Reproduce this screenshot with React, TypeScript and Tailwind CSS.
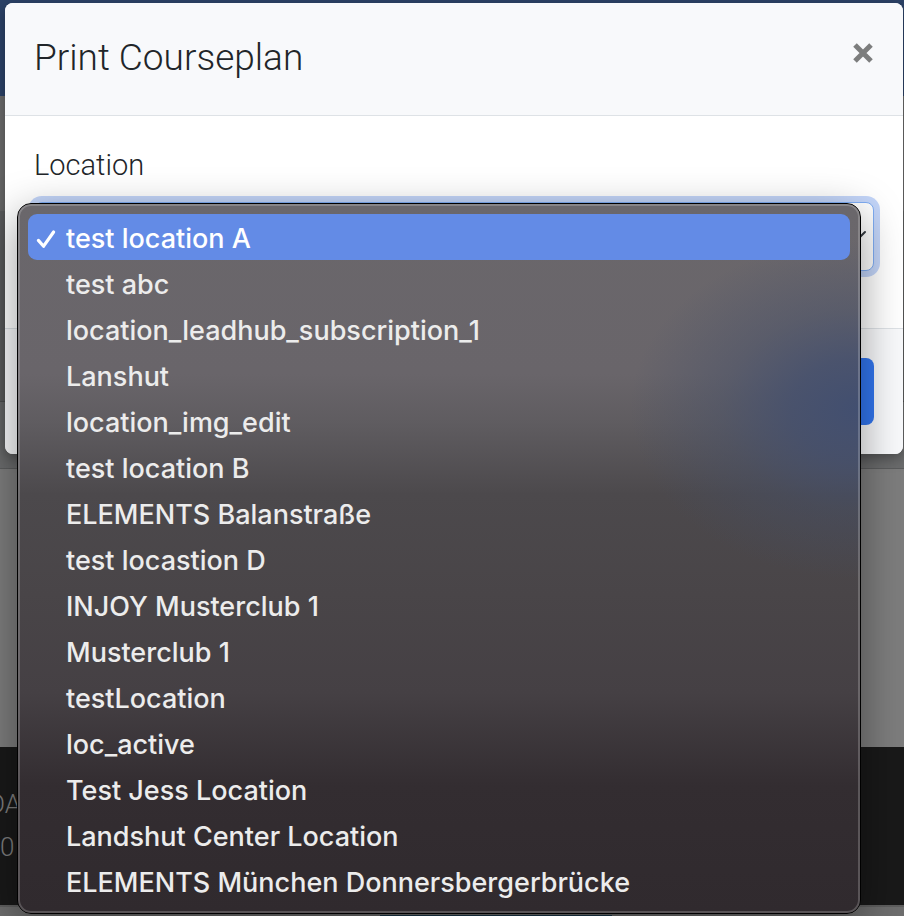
import { useState } from "react";
import clsx from "clsx";

const LOCATIONS = [
    "test location A",
    "test abc",
    "location_leadhub_subscription_1",
    "Lanshut",
    "location_img_edit",
    "test location B",
    "ELEMENTS Balanstraße",
    "test locastion D",
    "INJOY Musterclub 1",
    "Musterclub 1",
    "testLocation",
    "loc_active",
    "Test Jess Location",
    "Landshut Center Location",
    "ELEMENTS München Donnersbergerbrücke",
];

type MenuProps = {
    value: string;
    onChange: (value: string) => void;
};

function CheckIcon() {
    return (
        <svg viewBox="0 0 20 20" className="h-5 w-5" fill="none" aria-hidden="true">
            <path
                d="M2.4 11.4 L7.6 17.2 L17.6 3"
                stroke="currentColor"
                strokeWidth="3.2"
                strokeLinecap="round"
                strokeLinejoin="round"
            />
        </svg>
    );
}

function LocationMenu({ value, onChange }: MenuProps) {
    return (
        <div className="absolute top-px right-[13px] -left-[17px] z-10 rounded-[14px] border border-black bg-[radial-gradient(ellipse_230px_170px_at_100%_205px,#424f70_0%,#434f6ecc_30%,#444f6a66_60%,#454d6400_100%),linear-gradient(#6a676b_0%,#69656a_24%,#5f5c60_31%,#4c494c_41%,#494548_55%,#454044_69%,#332d31_82%,#302a2e_100%)] shadow-[0_12px_44px_rgba(0,0,0,0.4)]">
            <ul
                role="listbox"
                aria-label="Location"
                className="rounded-[13px] border-2 border-white/20 px-2 pt-2 pb-[7px] font-['Inter',sans-serif] text-[27px] leading-[42px] font-medium text-[#ececec]"
            >
                {LOCATIONS.map((location) => (
                    <li key={location} role="presentation">
                        <button
                            type="button"
                            role="option"
                            aria-selected={location === value}
                            onClick={() => onChange(location)}
                            className={clsx(
                                "flex h-[46px] w-full items-center rounded-[9px] pt-1 pl-2 text-left whitespace-nowrap",
                                location === value && "bg-[#638be6] text-white",
                            )}
                        >
                            <span className="flex w-[30px] shrink-0">
                                {location === value && <CheckIcon />}
                            </span>
                            {location}
                        </button>
                    </li>
                ))}
            </ul>
        </div>
    );
}

function PageBackdrop() {
    return (
        <div className="flex min-h-screen flex-col overflow-hidden">
            <header className="h-24 bg-[#2c4267]" />
            <main className="flex grow flex-col bg-[#7d7d7d]">
                <div className="h-[115px] bg-[#6b6b6b]" />
                <div className="h-[191px] border-b border-[#505152] bg-[#606162]" />
                <div className="h-[67px] border-b border-[#5c5d5e] bg-[#6c6d6e]" />
            </main>
            <footer>
                <div className="h-[158px] bg-[#191919] pt-9 text-[26px] leading-[43px] font-light text-[#7d7d7d]">
                    <p className="-ml-3">DA</p>
                    <p>0</p>
                </div>
                <div className="flex h-[11px] items-end border-t-2 border-[#5e5e5e] bg-[#6e6e6e] pl-[42%]">
                    <div className="h-px w-[232px] bg-[#1d3a4d]" />
                </div>
            </footer>
        </div>
    );
}

export default function App() {
    const [location, setLocation] = useState(LOCATIONS[0]);

    return (
        <div className="relative min-h-screen overflow-hidden font-['Roboto',sans-serif] text-[#212529]">
            <PageBackdrop />

            <div
                role="dialog"
                aria-labelledby="print-title"
                className="absolute top-[3px] right-px left-[5px] rounded-lg bg-white shadow-[0_4px_14px_rgba(0,0,0,0.35)]"
            >
                <div className="flex items-start justify-between rounded-t-lg border-b border-[#dee2e6] bg-[#f8f9fb] pt-7 pr-[30px] pb-[30px] pl-[29px]">
                    <h1 id="print-title" className="text-[37px] leading-[54px] font-light">
                        Print Courseplan
                    </h1>
                    <button type="button" aria-label="Close" className="mt-3 text-[#7c7d7d]">
                        <svg viewBox="0 0 20 20" className="h-5 w-5" fill="none" aria-hidden="true">
                            <path d="M2 2 L18 18 M18 2 L2 18" stroke="currentColor" strokeWidth="5" />
                        </svg>
                    </button>
                </div>

                <div className="px-[29px] pt-7 pb-[57px]">
                    <label htmlFor="location" className="mb-4 block text-[29px] leading-[42px] font-light">
                        Location
                    </label>
                    <div className="relative">
                        <select
                            id="location"
                            value={location}
                            onChange={(e) => setLocation(e.target.value)}
                            className="block h-[69px] w-full appearance-none rounded-lg border border-[#80aef5] bg-white px-5 text-[28px] font-light ring-[6px] ring-[#c3d5f9] outline-none"
                        >
                            {LOCATIONS.map((name) => (
                                <option key={name} value={name}>
                                    {name}
                                </option>
                            ))}
                        </select>
                        <svg
                            viewBox="0 0 24 14"
                            className="pointer-events-none absolute top-7 right-[7px] h-[14px] w-6"
                            fill="none"
                            aria-hidden="true"
                        >
                            <path
                                d="M2 2 L12 12 L22 2"
                                stroke="#343a40"
                                strokeWidth="2"
                                strokeLinecap="round"
                                strokeLinejoin="round"
                            />
                        </svg>
                        <LocationMenu value={location} onChange={setLocation} />
                    </div>
                </div>

                <div className="flex justify-end rounded-b-lg border-t border-[#dee2e6] bg-[#f8f9fb] px-[29px] pt-[29px] pb-[29px]">
                    <button
                        type="button"
                        aria-label="Print"
                        className="h-[67px] w-28 rounded-lg bg-[#3276f0]"
                    />
                </div>
            </div>
        </div>
    );
}
